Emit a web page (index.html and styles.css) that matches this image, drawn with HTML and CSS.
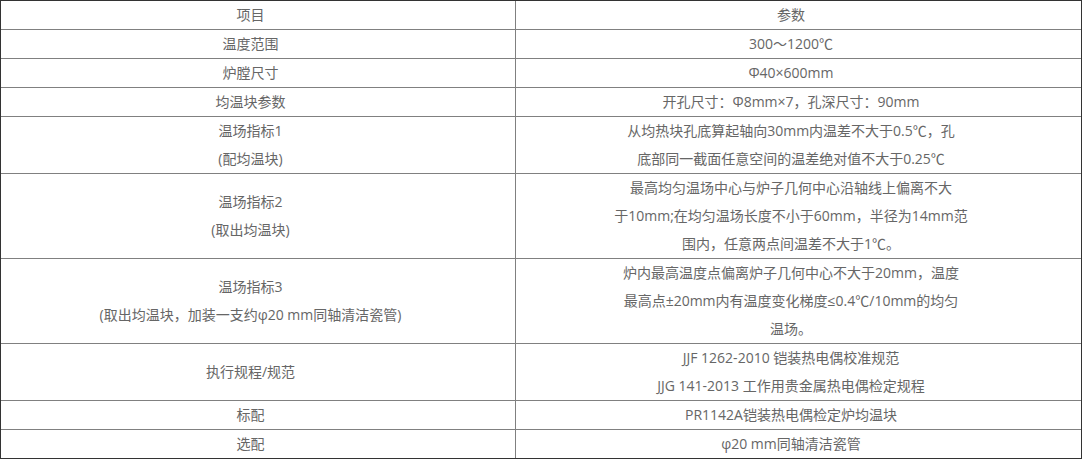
FILE: index.html
```html
<!DOCTYPE html>
<html lang="zh-CN">
<head>
<meta charset="utf-8">
<title>参数表</title>
<link rel="stylesheet" href="styles.css">
</head>
<body>
<table class="spec">
  <colgroup>
    <col class="col-name">
    <col class="col-value">
  </colgroup>
  <tbody>
    <tr><td>项目</td><td>参数</td></tr>
    <tr><td>温度范围</td><td>300～1200℃</td></tr>
    <tr><td>炉膛尺寸</td><td>Φ40×600mm</td></tr>
    <tr><td>均温块参数</td><td>开孔尺寸：Φ8mm×7，孔深尺寸：90mm</td></tr>
    <tr><td>温场指标1<br>(配均温块)</td><td>从均热块孔底算起轴向30mm内温差不大于0.5℃，孔<br>底部同一截面任意空间的温差绝对值不大于0.25℃</td></tr>
    <tr><td>温场指标2<br>(取出均温块)</td><td>最高均匀温场中心与炉子几何中心沿轴线上偏离不大<br>于10mm;在均匀温场长度不小于60mm，半径为14mm范<br>围内，任意两点间温差不大于1℃。</td></tr>
    <tr><td>温场指标3<br>(取出均温块，加装一支约φ20 mm同轴清洁瓷管)</td><td>炉内最高温度点偏离炉子几何中心不大于20mm，温度<br>最高点±20mm内有温度变化梯度≤0.4℃/10mm的均匀<br>温场。</td></tr>
    <tr><td>执行规程/规范</td><td>JJF 1262-2010 铠装热电偶校准规范<br>JJG 141-2013 工作用贵金属热电偶检定规程</td></tr>
    <tr><td>标配</td><td>PR1142A铠装热电偶检定炉均温块</td></tr>
    <tr><td>选配</td><td>φ20 mm同轴清洁瓷管</td></tr>
  </tbody>
</table>
</body>
</html>
```

FILE: styles.css
```css
html, body {
  margin: 0;
  padding: 0;
  background: #ffffff;
}

.spec {
  width: 1082px;
  table-layout: fixed;
  border-collapse: separate;
  border-spacing: 0;
  border: 1px solid #333333;
  font-family: "Open Sans", "Noto Sans CJK SC", sans-serif;
  font-size: 14px;
  color: #666666;
}

.col-name {
  width: 515px;
}

.col-value {
  width: 565px;
}

.spec td {
  padding: 0 15px 0 0;
  line-height: 28px;
  text-align: center;
  vertical-align: middle;
  border-bottom: 1px solid #808080;
  white-space: nowrap;
}

.spec td:first-child {
  border-right: 1px solid #808080;
}

.spec tr:last-child td {
  border-bottom: none;
}
```
